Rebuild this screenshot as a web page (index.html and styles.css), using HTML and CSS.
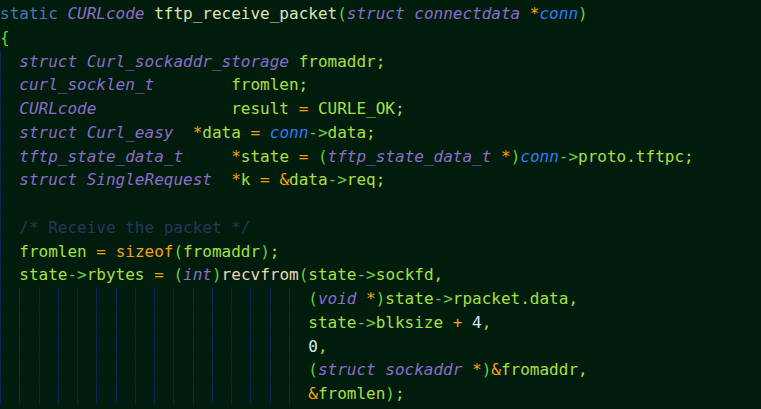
FILE: index.html
```html
<!DOCTYPE html>
<html>
<head>
<meta charset="utf-8">
<link rel="stylesheet" href="styles.css">
</head>
<body>
<div class="editor">
<div class="ln"><span class="kw">static</span> <span class="ty">CURLcode</span> <span class="fn">tftp_receive_packet</span><span class="pn">(</span><span class="ty">struct connectdata</span> <span class="op">*</span><span class="pa">conn</span><span class="pn">)</span></div>
<div class="ln"><span class="pn">{</span></div>
<div class="ln g0">  <span class="ty">struct Curl_sockaddr_storage</span> <span class="id">fromaddr;</span></div>
<div class="ln g0">  <span class="ty">curl_socklen_t</span>        <span class="id">fromlen;</span></div>
<div class="ln g0">  <span class="ty">CURLcode</span>              <span class="id">result</span> <span class="op">=</span> <span class="id">CURLE_OK;</span></div>
<div class="ln g0">  <span class="ty">struct Curl_easy</span>  <span class="op">*</span><span class="id">data</span> <span class="op">=</span> <span class="pa">conn</span><span class="ar">-&gt;</span><span class="id">data;</span></div>
<div class="ln g0">  <span class="ty">tftp_state_data_t</span>     <span class="op">*</span><span class="id">state</span> <span class="op">=</span> <span class="pn">(</span><span class="ty">tftp_state_data_t</span> <span class="op">*</span><span class="pn">)</span><span class="pa">conn</span><span class="ar">-&gt;</span><span class="id">proto.tftpc;</span></div>
<div class="ln g0">  <span class="ty">struct SingleRequest</span>  <span class="op">*</span><span class="id">k</span> <span class="op">=</span> <span class="op">&amp;</span><span class="id">data</span><span class="ar">-&gt;</span><span class="id">req;</span></div>
<div class="ln g0"> </div>
<div class="ln g0">  <span class="cm">/* Receive the packet */</span></div>
<div class="ln g0">  <span class="id">fromlen</span> <span class="op">=</span> <span class="op">sizeof</span><span class="pn">(</span><span class="id">fromaddr</span><span class="pn">)</span><span class="id">;</span></div>
<div class="ln g0">  <span class="id">state</span><span class="ar">-&gt;</span><span class="id">rbytes</span> <span class="op">=</span> <span class="pn">(</span><span class="ty">int</span><span class="pn">)</span><span class="fc">recvfrom</span><span class="pn">(</span><span class="id">state</span><span class="ar">-&gt;</span><span class="id">sockfd,</span></div>
<div class="ln gm">                                <span class="pn">(</span><span class="ty">void</span> <span class="op">*</span><span class="pn">)</span><span class="id">state</span><span class="ar">-&gt;</span><span class="id">rpacket.data,</span></div>
<div class="ln gm">                                <span class="id">state</span><span class="ar">-&gt;</span><span class="id">blksize</span> <span class="op">+</span> <span class="nu">4</span><span class="id">,</span></div>
<div class="ln gm">                                <span class="nu">0</span><span class="id">,</span></div>
<div class="ln gm">                                <span class="pn">(</span><span class="ty">struct sockaddr</span> <span class="op">*</span><span class="pn">)</span><span class="op">&amp;</span><span class="id">fromaddr,</span></div>
<div class="ln gm">                                <span class="op">&amp;</span><span class="id">fromlen</span><span class="pn">)</span><span class="id">;</span></div>
</div>
</body>
</html>
```
FILE: styles.css
```css
html, body {
  margin: 0;
  padding: 0;
  background: #001c0d;
  overflow: hidden;
}
.editor {
  width: 761px;
  height: 409px;
  background: #001c0d;
  font-family: "DejaVu Sans Mono", monospace;
  font-size: 16px;
  line-height: 23.75px;
  padding-top: 2px;
  box-sizing: border-box;
  color: #a8e040;
}
.ln {
  height: 23.75px;
  white-space: pre;
}
.g0 {
  background-image: linear-gradient(to right, #0a2552 0 1px, transparent 1px);
  background-repeat: no-repeat;
  background-size: 2ch calc(100% - 1px);
}
.gm {
  background-image: repeating-linear-gradient(to right, #0a2552 0 1px, transparent 1px 2ch);
  background-repeat: no-repeat;
  background-size: 31ch calc(100% - 1px);
}
.kw { color: #4a78b4; }
.ty { color: #8d6cc9; font-style: italic; }
.fn { color: #dfe6b4; }
.fc { color: #efd8b0; }
.pn { color: #66d03a; }
.op { color: #f5a30c; }
.pa { color: #2f7cf6; font-style: italic; }
.id { color: #a8e040; }
.ar { color: #6cc644; }
.cm { color: #25385c; }
.nu { color: #d2e8f2; }
```
